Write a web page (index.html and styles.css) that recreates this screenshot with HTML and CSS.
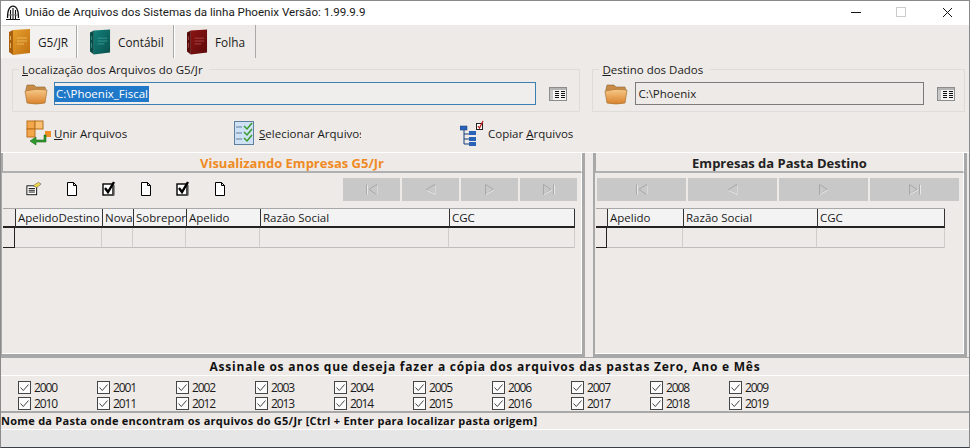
FILE: index.html
```html
<!DOCTYPE html>
<html lang="pt-BR">
<head>
  <meta charset="UTF-8">
  <title>União de Arquivos</title>
  <link rel="stylesheet" href="styles.css">
</head>
<body>
  <svg class="defs" width="0" height="0">
    <defs>
      <linearGradient id="gFolder" x1="0" y1="0" x2="0" y2="1">
        <stop offset="0" stop-color="#f6c98a"/>
        <stop offset="1" stop-color="#d9822b"/>
      </linearGradient>
      <linearGradient id="gGold" x1="0" y1="0" x2="1" y2="1">
        <stop offset="0" stop-color="#e6a02c"/>
        <stop offset="1" stop-color="#c06f10"/>
      </linearGradient>
      <linearGradient id="gTeal" x1="0" y1="0" x2="1" y2="1">
        <stop offset="0" stop-color="#12807a"/>
        <stop offset="1" stop-color="#0a4f4c"/>
      </linearGradient>
      <linearGradient id="gRed" x1="0" y1="0" x2="1" y2="1">
        <stop offset="0" stop-color="#8c1414"/>
        <stop offset="1" stop-color="#5a0909"/>
      </linearGradient>
      <symbol id="folder" viewBox="0 0 24 22">
        <path d="M2 6 L3 2 H10 L12 4 H21 L22 8 L2 9Z" fill="#c98a45" stroke="#8a6a40" stroke-width=".6"/>
        <path d="M1 8 Q12 5 23 7 L21 20 Q12 22 3 20Z" fill="url(#gFolder)" stroke="#a8712f" stroke-width=".7"/>
      </symbol>
      <symbol id="list" viewBox="0 0 18 14">
        <rect x=".5" y=".5" width="17" height="13" fill="#f4f4f4" stroke="#8c8c8c"/>
        <rect x="1" y="1" width="16" height="2" fill="#b4b4b4"/>
        <rect x="1" y="3" width="3" height="10" fill="#c8c8c8"/>
        <path d="M6 4.500h4M6 6.500h4M6 8.500h4M6 10.500h4M12 4.500h4M12 6.500h4M12 8.500h4M12 10.500h4" stroke="#111" stroke-width="1"/>
      </symbol>
      <symbol id="check" viewBox="0 0 13 13">
        <rect x=".5" y=".5" width="12" height="12" fill="#fbfbfb" stroke="#444"/>
        <path d="M2.500 6.500 L5.300 9.500 L10.500 3.500" fill="none" stroke="#444" stroke-width="1"/>
      </symbol>
      <symbol id="page" viewBox="0 0 12 14">
        <path d="M1.500 .5 H7.500 L10.500 3.500 V13.500 H1.500Z M7.500 .5 V3.500 H10.500" fill="#fff" stroke="#000"/>
      </symbol>
      <symbol id="pagecheck" viewBox="0 0 14 15">
        <rect x="1" y="3" width="10" height="11" fill="#fff" stroke="#000" stroke-width="1.400"/>
        <path d="M3 7 L6 11 L12 1" fill="none" stroke="#000" stroke-width="2.400"/>
        <path d="M12 4 V14 H3" fill="none" stroke="#555" stroke-width="1.200"/>
      </symbol>
      <symbol id="first" viewBox="0 0 13 11">
        <path d="M1.500 .5V10.500M11.500 .5V10.500L4 5.500Z" fill="none" stroke="#a8a8a8"/>
        <path d="M2.500 1V10.500M12 1.500V10.500" stroke="#e8e8e8" fill="none"/>
      </symbol>
      <symbol id="prev" viewBox="0 0 13 11">
        <path d="M10.500 .5V10.500L2.500 5.500Z" fill="none" stroke="#a8a8a8"/>
        <path d="M3 6.500L11 10.500V1.500" stroke="#e8e8e8" fill="none"/>
      </symbol>
      <symbol id="next" viewBox="0 0 13 11">
        <path d="M2.500 .5V10.500L10.500 5.500Z" fill="none" stroke="#a8a8a8"/>
        <path d="M3 10.500L11 6" stroke="#e8e8e8" fill="none"/>
      </symbol>
      <symbol id="last" viewBox="0 0 13 11">
        <path d="M11.500 .5V10.500M1.500 .5V10.500L9 5.500Z" fill="none" stroke="#a8a8a8"/>
        <path d="M2 10.500L10 6M12.500 1V10.500" stroke="#e8e8e8" fill="none"/>
      </symbol>
    </defs>
  </svg>

  <div class="window">
    <header class="titlebar">
      <svg class="app-icon" width="16" height="16" viewBox="0 0 16 16">
        <path d="M2.500 13 C2.500 8 3 4 5.500 2 C7 1 9 1 10.500 2 C13 4 13.500 8 13.500 13" fill="none" stroke="#111" stroke-width="1.300"/>
        <path d="M5.500 14V5M8 14V3M10.500 14V5M1 14.500H15" stroke="#111" stroke-width="1.100"/>
        <path d="M3 10H13" stroke="#777" stroke-width="1"/>
      </svg>
      <span class="title">União de Arquivos dos Sistemas da linha Phoenix Versão: 1.99.9.9</span>
      <div class="win-buttons">
        <svg width="46" height="16" viewBox="0 0 46 16"><path d="M20 7.500H30" stroke="#111"/></svg>
        <svg width="46" height="16" viewBox="0 0 46 16"><rect x="19.500" y="2.500" width="9" height="9" fill="none" stroke="#ccc"/></svg>
        <svg width="46" height="16" viewBox="0 0 46 16"><path d="M20 3L29 12M29 3L20 12" stroke="#111"/></svg>
      </div>
    </header>

    <nav class="tabs">
      <div class="tab tab-active tab-g5">
        <svg width="22" height="26" viewBox="0 0 22 26">
          <path d="M4 1 L21 0 V24 L4 26Z" fill="url(#gGold)"/>
          <path d="M0 3 L4 1 V26 L0 23Z" fill="#a8600f"/>
          <path d="M8 9H18M8 12H18M8 15H15M1.500 7V11M1.500 14V19" stroke="#f2c36b" stroke-width=".8"/>
        </svg>
        <span>G5/JR</span>
      </div>
      <div class="tab tab-cont">
        <svg width="21" height="26" viewBox="0 0 22 26">
          <path d="M4 1 L21 0 V24 L4 26Z" fill="url(#gTeal)"/>
          <path d="M0 3 L4 1 V26 L0 23Z" fill="#0a4c48"/>
          <path d="M8 9H18M8 12H18M8 15H15M1.500 7V11M1.500 14V19" stroke="#3ea39c" stroke-width=".8"/>
        </svg>
        <span>Contábil</span>
      </div>
      <div class="tab tab-folha">
        <svg width="21" height="26" viewBox="0 0 22 26">
          <path d="M4 1 L21 0 V24 L4 26Z" fill="url(#gRed)"/>
          <path d="M0 3 L4 1 V26 L0 23Z" fill="#560b0b"/>
          <path d="M8 9H18M8 12H18M8 15H15M1.500 7V11M1.500 14V19" stroke="#b65050" stroke-width=".8"/>
        </svg>
        <span>Folha</span>
      </div>
    </nav>

    <section class="paths">
      <fieldset class="group group-source">
        <legend><u>L</u>ocalização dos Arquivos do G5/Jr</legend>
        <svg class="folder" width="24" height="22"><use href="#folder"/></svg>
        <div class="field field-focus"><span class="selected">C:\Phoenix_Fiscal</span></div>
        <svg class="list" width="18" height="14"><use href="#list"/></svg>
      </fieldset>
      <fieldset class="group group-dest">
        <legend><u>D</u>estino dos Dados</legend>
        <svg class="folder" width="24" height="22"><use href="#folder"/></svg>
        <div class="field">C:\Phoenix</div>
        <svg class="list" width="18" height="14"><use href="#list"/></svg>
      </fieldset>
    </section>

    <section class="actions">
      <div class="action action-join">
        <svg width="26" height="26" viewBox="0 0 26 26">
          <rect x="1" y="1" width="8" height="8" fill="#f3a64a" stroke="#b86f1c"/>
          <rect x="9" y="1" width="8" height="8" fill="#f8c070" stroke="#b86f1c"/>
          <rect x="1" y="9" width="8" height="8" fill="#f3a64a" stroke="#b86f1c"/>
          <rect x="19" y="11" width="6" height="6" fill="#ef8f24"/>
          <path d="M18 15V20H10V17L4 21L10 25V22H20V15Z" fill="#2f9a2f" stroke="#1b6b1b" stroke-width=".6"/>
        </svg>
        <span><u>U</u>nir Arquivos</span>
      </div>
      <div class="action action-select">
        <svg width="20" height="24" viewBox="0 0 20 24">
          <rect x=".5" y=".5" width="19" height="23" fill="#cfe2f5" stroke="#5f7f9f"/>
          <path d="M2 6H8M2 12H8M2 18H8" stroke="#5f7f9f"/>
          <path d="M10 5L13 8L18 2M10 11L13 14L18 8M10 17L13 20L18 14" fill="none" stroke="#3a9a2a" stroke-width="1.500"/>
        </svg>
        <span class="clipped"><u>S</u>elecionar Arquivos</span>
      </div>
      <div class="action action-copy">
        <svg width="24" height="26" viewBox="0 0 24 26">
          <rect x="0" y="6" width="7" height="4" fill="#2a62b8" stroke="#173c7a" stroke-width=".5"/>
          <path d="M4 10V24M4 14H9M4 19H9M4 24H9" stroke="#173c7a"/>
          <rect x="9" y="11" width="7" height="4" fill="#2a62b8"/>
          <rect x="9" y="17" width="7" height="4" fill="#2a62b8"/>
          <rect x="9" y="22" width="7" height="4" fill="#2a62b8"/>
          <rect x="16.500" y="3.500" width="6" height="6" fill="#fff" stroke="#222"/>
          <path d="M18 6L19.500 8L23 1" fill="none" stroke="#c01818" stroke-width="1.200"/>
        </svg>
        <span>Copiar <u>A</u>rquivos</span>
      </div>
    </section>

    <main class="panels">
      <section class="panel panel-left">
        <h2 class="panel-title title-orange">Visualizando Empresas G5/Jr</h2>
        <div class="toolbar">
          <div class="tools">
            <svg class="tool-props" width="16" height="15" viewBox="0 0 18 16">
              <rect x="1" y="5" width="11" height="10" fill="#fff" stroke="#000"/>
              <path d="M3 8H10M3 10H10M3 12H10" stroke="#000"/>
              <path d="M8 5L14 1L17 3L12 7Z" fill="#f2d64a" stroke="#555" stroke-width=".6"/>
            </svg>
            <svg class="tool" width="12" height="14"><use href="#page"/></svg>
            <svg class="tool" width="14" height="15"><use href="#pagecheck"/></svg>
            <svg class="tool" width="12" height="14"><use href="#page"/></svg>
            <svg class="tool" width="14" height="15"><use href="#pagecheck"/></svg>
            <svg class="tool" width="12" height="14"><use href="#page"/></svg>
          </div>
          <div class="nav nav-left">
            <button><svg width="13" height="11"><use href="#first"/></svg></button>
            <button><svg width="13" height="11"><use href="#prev"/></svg></button>
            <button><svg width="13" height="11"><use href="#next"/></svg></button>
            <button><svg width="13" height="11"><use href="#last"/></svg></button>
          </div>
        </div>
        <div class="grid grid-left">
          <div class="head corner"></div>
          <div class="head">ApelidoDestino</div>
          <div class="head">Nova</div>
          <div class="head">Sobrepor</div>
          <div class="head">Apelido</div>
          <div class="head">Razão Social</div>
          <div class="head">CGC</div>
          <div class="cell marker"></div>
          <div class="cell"></div>
          <div class="cell"></div>
          <div class="cell"></div>
          <div class="cell"></div>
          <div class="cell"></div>
          <div class="cell"></div>
        </div>
      </section>

      <section class="panel panel-right">
        <h2 class="panel-title">Empresas da Pasta Destino</h2>
        <div class="toolbar">
          <div class="nav nav-right">
            <button><svg width="13" height="11"><use href="#first"/></svg></button>
            <button><svg width="13" height="11"><use href="#prev"/></svg></button>
            <button><svg width="13" height="11"><use href="#next"/></svg></button>
            <button><svg width="13" height="11"><use href="#last"/></svg></button>
          </div>
        </div>
        <div class="grid grid-right">
          <div class="head corner"></div>
          <div class="head">Apelido</div>
          <div class="head">Razão Social</div>
          <div class="head">CGC</div>
          <div class="cell marker"></div>
          <div class="cell"></div>
          <div class="cell"></div>
          <div class="cell"></div>
        </div>
      </section>
    </main>

    <section class="years">
      <h3 class="years-title">Assinale os anos que deseja fazer a cópia dos arquivos das pastas Zero, Ano e Mês</h3>
      <div class="years-grid">
        <label><svg width="13" height="13"><use href="#check"/></svg>2000</label>
        <label><svg width="13" height="13"><use href="#check"/></svg>2001</label>
        <label><svg width="13" height="13"><use href="#check"/></svg>2002</label>
        <label><svg width="13" height="13"><use href="#check"/></svg>2003</label>
        <label><svg width="13" height="13"><use href="#check"/></svg>2004</label>
        <label><svg width="13" height="13"><use href="#check"/></svg>2005</label>
        <label><svg width="13" height="13"><use href="#check"/></svg>2006</label>
        <label><svg width="13" height="13"><use href="#check"/></svg>2007</label>
        <label><svg width="13" height="13"><use href="#check"/></svg>2008</label>
        <label><svg width="13" height="13"><use href="#check"/></svg>2009</label>
        <label><svg width="13" height="13"><use href="#check"/></svg>2010</label>
        <label><svg width="13" height="13"><use href="#check"/></svg>2011</label>
        <label><svg width="13" height="13"><use href="#check"/></svg>2012</label>
        <label><svg width="13" height="13"><use href="#check"/></svg>2013</label>
        <label><svg width="13" height="13"><use href="#check"/></svg>2014</label>
        <label><svg width="13" height="13"><use href="#check"/></svg>2015</label>
        <label><svg width="13" height="13"><use href="#check"/></svg>2016</label>
        <label><svg width="13" height="13"><use href="#check"/></svg>2017</label>
        <label><svg width="13" height="13"><use href="#check"/></svg>2018</label>
        <label><svg width="13" height="13"><use href="#check"/></svg>2019</label>
      </div>
    </section>

    <footer class="status">
      <div class="status-text">Nome da Pasta onde encontram os arquivos do G5/Jr [Ctrl + Enter para localizar pasta origem]</div>
      <div class="status-strip"></div>
    </footer>
  </div>
</body>
</html>
```

FILE: styles.css
```css
* {
  box-sizing: border-box;
}

html, body {
  margin: 0;
  padding: 0;
  overflow: hidden;
}

body {
  font-family: "Open Sans", "Noto Sans", sans-serif;
  font-size: 11.5px;
  color: #1a1a1a;
}

.defs {
  display: block;
  height: 0;
}

.window {
  width: 970px;
  height: 448px;
  display: flex;
  flex-direction: column;
  background: #eeeae7;
  border: 1px solid #8a8a8a;
  border-bottom: 1px solid #3a3f4a;
}

/* barra de titulo */
.titlebar {
  flex: 0 0 24px;
  display: flex;
  align-items: center;
  background: #fff;
  padding-left: 4px;
}

.app-icon {
  margin-right: 4px;
}

.title {
  flex: 1;
  font-family: Roboto, sans-serif;
  font-size: 11.6px;
  padding-bottom: 3px;
}

.win-buttons {
  display: flex;
}

/* abas */
.tabs {
  flex: 0 0 33px;
  display: flex;
}

.tab {
  display: flex;
  align-items: center;
  gap: 7px;
  font-size: 11.8px;
  border-right: 1px solid #a8a8a8;
  border-left: 1px solid #fff;
}

.tab-active {
  background: #f4f2f0;
  border-top: 1px solid #d8d8d8;
}

.tab-g5 {
  width: 76px;
  padding-left: 7px;
}

.tab-cont {
  width: 97px;
  padding-left: 12px;
}

.tab-folha {
  width: 82px;
  padding-left: 12px;
}

/* localizacao */
.paths {
  flex: 0 0 56px;
  display: flex;
  padding: 5px 4px 0 11px;
  gap: 12px;
}

.group {
  margin: 0;
  padding: 0 0 0 11px;
  height: 49px;
  border: 1px solid #dfdcd9;
  display: flex;
  align-items: center;
  min-inline-size: 0;
}

.group legend {
  padding: 0 6px 0 3px;
  margin-left: -5px;
  line-height: 13px;
}

.group-source {
  width: 569px;
}

.group-dest {
  width: 373px;
}

.folder {
  flex: none;
}

.field {
  height: 23px;
  border: 1px solid #7a7a7a;
  line-height: 21px;
  padding-left: 2px;
  margin-left: 7px;
  flex: none;
}

.group-source .field {
  width: 482px;
  margin-left: 6px;
  padding-left: 0;
  border-color: #3c7fb1;
  background: #f0eeec;
}

.group-dest .field {
  width: 289px;
}

.selected {
  display: inline-block;
  background: #1f78c8;
  color: #fff;
  line-height: 16px;
  padding: 0 1px;
}

.list {
  flex: none;
  margin-left: 13px;
}

/* acoes */
.actions {
  flex: 0 0 38px;
  display: flex;
  align-items: center;
}

.action {
  display: flex;
  align-items: center;
}

.action-join {
  margin-left: 25px;
  width: 208px;
}

.action-join span {
  margin-left: 2px;
}

.action-select {
  width: 226px;
}

.action-select span {
  margin-left: 5px;
}

.clipped {
  display: block;
  width: 102px;
  overflow: hidden;
  white-space: nowrap;
}

.action-copy span {
  margin-left: 4px;
}

/* paineis */
.panels {
  flex: 0 0 205px;
  display: flex;
  gap: 8px;
  border-top: 1px solid #fff;
}

.panel {
  display: flex;
  flex-direction: column;
  border-right: 3px solid #a8a8a8;
  border-bottom: 3px solid #a8a8a8;
  border-left: 2px solid #a8a8a8;
  box-shadow: inset -1px -1px 0 #fff;
}

.panel-left {
  width: 584px;
  border-left-width: 1px;
}

.panel-right {
  width: 374px;
}

.panel-title {
  flex: 0 0 19px;
  margin: 0;
  padding-top: 2px;
  text-align: center;
  font-size: 13px;
  line-height: 16px;
  font-weight: 700;
  color: #222;
  border-left: 1px solid #a8a8a8;
  border-bottom: 2px solid #b0b0b0;
  border-right: 1px solid #fff;
}

.title-orange {
  color: #ef8a24;
}

.toolbar {
  flex: 0 0 35px;
  display: flex;
  align-items: flex-start;
  justify-content: flex-end;
  padding-top: 5px;
}

.tools {
  flex: 1;
  display: flex;
  align-items: center;
  padding: 3px 0 0 24px;
}

.tool {
  margin-left: 24px;
  flex: none;
}

.tool-props {
  flex: none;
}

.nav {
  display: flex;
  gap: 2px;
}

.nav button {
  height: 23px;
  background: #c8c8c8;
  border: 0;
  padding: 0;
  display: flex;
  align-items: center;
  justify-content: center;
}

.nav-left {
  margin-right: 5px;
}

.nav-left button {
  width: 57px;
}

.nav-right {
  margin-right: 5px;
}

.nav-right button {
  width: 89px;
}

/* tabelas */
.grid {
  display: grid;
  grid-template-rows: 19px 20px;
  border-top: 1px solid #a8a8a8;
}

.grid-left {
  width: 572px;
  margin-left: 1px;
  grid-template-columns: 12px 87px 31px 53px 74px 189px 126px;
}

.grid-right {
  width: 349px;
  margin-left: 1px;
  grid-template-columns: 11px 76px 134px 128px;
}

.head {
  background: #f3f3f3;
  border-left: 1px solid #333;
  border-bottom: 2px solid #222;
  padding-left: 2px;
  line-height: 18px;
  white-space: nowrap;
  overflow: hidden;
}

.corner {
  background: #eeeae7;
  border-left: 0;
  border-bottom: 2px solid #222;
}

.grid-left .head:nth-child(7),
.grid-right .head:nth-child(4) {
  border-right: 1px solid #333;
}

.cell {
  border-right: 1px solid #d0cdca;
  border-bottom: 1px solid #bdbdbd;
}

.marker {
  border-right: 1px solid #222;
  border-bottom: 1px solid #222;
}

/* anos */
.years {
  flex: 0 0 56px;
  display: flex;
  flex-direction: column;
  border-top: 1px solid #a8a8a8;
  border-bottom: 2px solid #a8a8a8;
}

.years-title {
  flex: 0 0 17px;
  margin: 0;
  padding-top: 1px;
  text-align: center;
  font-size: 12px;
  line-height: 16px;
  font-weight: 700;
  letter-spacing: 0.78px;
  color: #111;
  border-bottom: 1px solid #fff;
}

.years-grid {
  display: grid;
  grid-template-columns: repeat(10, 79px);
  grid-template-rows: 16px 16px;
  padding: 3px 0 0 17px;
}

.years-grid label {
  display: flex;
  align-items: center;
  gap: 3px;
  font-size: 12px;
  letter-spacing: -1.1px;
}

/* status */
.status {
  flex: 1;
  display: flex;
  flex-direction: column;
}

.status-text {
  flex: 0 0 17px;
  line-height: 15px;
  font-weight: 700;
  font-size: 11px;
  letter-spacing: 0.25px;
  color: #111;
  border-bottom: 1px solid #fff;
}

.status-strip {
  flex: 1;
  background: #e6e6e6;
}
```
